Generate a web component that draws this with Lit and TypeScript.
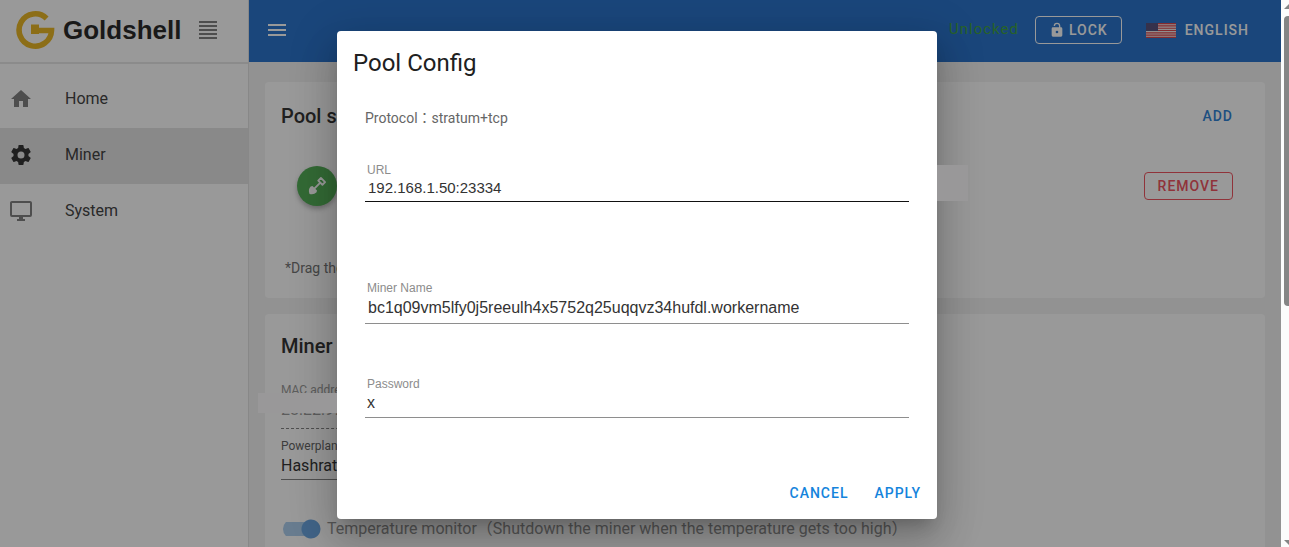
import { LitElement, html, css, svg } from "lit";
import { customElement, state } from "lit/decorators.js";

const icons = {
  home: svg`<path d="M10 20v-6h4v6h5v-8h3L12 3 2 12h3v8z"/>`,
  cog: svg`<path d="M12 15.5A3.5 3.5 0 0 1 8.5 12 3.5 3.5 0 0 1 12 8.5a3.5 3.5 0 0 1 3.5 3.5 3.5 3.5 0 0 1-3.5 3.5m7.43-2.53c.04-.32.07-.64.07-.97s-.03-.66-.07-1l2.11-1.63c.19-.15.24-.42.12-.64l-2-3.46c-.12-.22-.39-.31-.61-.22l-2.49 1c-.52-.39-1.06-.73-1.69-.98l-.37-2.65A.506.506 0 0 0 14 2h-4c-.25 0-.46.18-.5.42l-.37 2.65c-.63.25-1.17.59-1.69.98l-2.49-1c-.22-.09-.49 0-.61.22l-2 3.46c-.13.22-.07.49.12.64L4.57 11c-.04.34-.07.67-.07 1s.03.65.07.97l-2.11 1.66c-.19.15-.25.42-.12.64l2 3.46c.12.22.39.3.61.22l2.49-1.01c.52.4 1.06.74 1.69.99l.37 2.65c.04.24.25.42.5.42h4c.25 0 .46-.18.5-.42l.37-2.65c.63-.26 1.17-.59 1.69-.99l2.49 1.01c.22.08.49 0 .61-.22l2-3.46c.12-.22.07-.49-.12-.64z"/>`,
  monitor: svg`<path d="M21 16H3V4h18m0-2H3c-1.110 0-2 .89-2 2v12a2 2 0 0 0 2 2h7v2H8v2h8v-2h-2v-2h7a2 2 0 0 0 2-2V4c0-1.110-.9-2-2-2z"/>`,
  menu: svg`<path d="M3 6h18v2H3V6m0 5h18v2H3v-2m0 5h18v2H3z"/>`,
  justify: svg`<path d="M3 3h18v2H3V3m0 4h18v2H3V7m0 4h18v2H3v-2m0 4h18v2H3v-2m0 4h18v2H3z"/>`,
  lock: svg`<path fill-rule="evenodd" d="M18 8a2 2 0 0 1 2 2v10a2 2 0 0 1-2 2H6a2 2 0 0 1-2-2V10a2 2 0 0 1 2-2h9V6a3 3 0 0 0-6 0H7a5 5 0 0 1 10 0v2zM12 17a2 2 0 1 0 0-4 2 2 0 0 0 0 4z"/>`,
  shovel: svg`<path d="M3 21.500c-1.400-3.500-.8-6.800 1.400-9l2.200-.5 5.400 5.400-.5 2.200c-2.200 2.200-5 2.900-8.500 1.900z"/><path d="M8.500 15.500 16 8M13.500 5.500l5 5 3.200-3.200-5-5z" fill="none" stroke="currentColor" stroke-width="2.200" stroke-linejoin="round"/>`,
};

type IconName = keyof typeof icons;
const icon = (name: IconName, cls = "icon") =>
  html`<svg class=${cls} viewBox="0 0 24 24" aria-hidden="true">${icons[name]}</svg>`;

const shared = css`
  * { box-sizing: border-box; }
  .icon { width: 24px; height: 24px; fill: currentColor; flex: none; }
  button { font: 500 14px/16px Roboto, sans-serif; letter-spacing: 1px; background: none; border: 0; margin: 0; cursor: pointer; text-transform: uppercase; }
`;

@customElement("side-nav")
export class SideNav extends LitElement {
  static styles = [shared, css`
    :host { display: block; background: #fff; border-right: 1px solid #e0e0e0; }
    .brand { display: flex; align-items: center; height: 64px; padding: 0 16px 3px 15px; border-bottom: 2px solid #e6e6e6; }
    .logo { width: 40px; height: 40px; flex: none; }
    .name { font: bold 26px/32px "Liberation Sans", Arial, sans-serif; color: #141414; margin-left: 8px; }
    .brand button { padding: 0; margin-left: 15px; color: #606060; display: flex; }
    nav { padding-top: 8px; }
    a { display: flex; align-items: center; gap: 32px; height: 56px; padding: 0 9px 2px; color: #303030; font-size: 16px; line-height: 24px; text-decoration: none; }
    .icon { color: #757575; }
    .active { background: #e2e2e2; }
    .active .icon { color: #202020; }
  `];
  private items: { name: IconName; text: string }[] = [
    { name: "home", text: "Home" },
    { name: "cog", text: "Miner" },
    { name: "monitor", text: "System" },
  ];
  render() {
    return html`
      <div class="brand">
        <svg class="logo" viewBox="0 0 40 40" aria-hidden="true">
          <path d="M31.600 8.400A16.200 16.200 0 1 0 36.500 20.500H22" fill="none" stroke="#e8b010" stroke-width="5.600"/>
          <path d="M16 14.500h8v9.500h-8z" fill="#e8b010"/>
        </svg>
        <span class="name">Goldshell</span>
        <button aria-label="Collapse">${icon("justify")}</button>
      </div>
      <nav>
        ${this.items.map((i) => html`<a href="#" class=${i.text === "Miner" ? "active" : ""}>${icon(i.name)}<span>${i.text}</span></a>`)}
      </nav>`;
  }
}

@customElement("top-bar")
export class TopBar extends LitElement {
  static styles = [shared, css`
    :host { display: flex; align-items: center; height: 62px; padding: 0 32px 2px 16px; background: #1567c8; color: #fff; }
    button { display: flex; align-items: center; color: #fff; }
    .menu { padding: 0; }
    .state { margin-left: auto; color: #2f9a2f; font-size: 15px; line-height: 20px; letter-spacing: 1px; padding-bottom: 2px; }
    .lock { height: 28px; margin-left: 16px; padding: 0 13px; gap: 4px; border: 1px solid #fff; border-radius: 4px; }
    .lock .icon { width: 16px; height: 16px; }
    .lang { margin-left: 24px; padding: 0; gap: 9px; }
    .flag { width: 30px; height: 15px; }
  `];
  render() {
    return html`
      <button class="menu" aria-label="Menu">${icon("menu")}</button>
      <span class="state">Unlocked</span>
      <button class="lock">${icon("lock")}Lock</button>
      <button class="lang">
        <svg class="flag" viewBox="0 0 30 15" aria-hidden="true">
          <path fill="#f0eaea" d="M0 0h30v15H0z"/>
          <path stroke="#d8343c" stroke-width="1.150" d="M0 .6h30M0 2.900h30M0 5.200h30M0 7.500h30M0 9.800h30M0 12.100h30M0 14.400h30"/>
          <path fill="#47406f" d="M0 0h12v8H0z"/>
        </svg>English
      </button>`;
  }
}

@customElement("miner-page")
export class MinerPage extends LitElement {
  static styles = [shared, css`
    :host { display: flex; flex-direction: column; gap: 16px; padding: 20px 16px 0; background: #f3f3f3; }
    section { background: #fff; padding: 16px; border-radius: 4px; color: #202020; }
    h2 { font-size: 20px; line-height: 32px; font-weight: 500; margin: 0; }
    .head { display: flex; justify-content: space-between; align-items: center; padding: 2px 16px 0 0; }
    .add { color: #1976d2; padding: 8px 0; }
    .pool { display: flex; justify-content: space-between; align-items: center; padding: 34px 16px 0; }
    .badge { display: flex; align-items: center; justify-content: center; width: 40px; height: 40px; border-radius: 50%; background: #43a847; color: #fff; box-shadow: 0 3px 5px rgba(0, 0, 0, .3); }
    .badge .icon { width: 20px; height: 20px; }
    .remove { height: 28px; padding: 0 13px; border: 1px solid #ee4450; border-radius: 4px; color: #ee4450; }
    .hint { margin: 0; padding: 52px 4px 4px; font-size: 14px; line-height: 20px; color: #666; }
    .field { display: flex; flex-direction: column; width: 50%; }
    label { font-size: 12px; line-height: 16px; color: #555; }
    input[type="text"], select { appearance: none; border: 0; border-bottom: 1px solid #777; border-radius: 0; background: none; padding: 0; margin: 0; height: 26px; font: 16px/24px Roboto, sans-serif; color: #202020; }
    .mac { padding-top: 20px; }
    .mac label { color: #909090; }
    .mac input[type="text"] { height: 31px; padding-bottom: 8px; color: #909090; border-bottom-style: dashed; }
    .power { padding-top: 9px; }
    .power select { padding-bottom: 2px; }
    .monitor { display: flex; align-items: center; gap: 6px; padding: 37px 0 0 2px; }
    .switch { appearance: none; width: 38px; height: 20px; margin: 0; border-radius: 10px; opacity: .7; background: radial-gradient(circle at 28px 10px, #1976d2 9px, transparent 10px), linear-gradient(#80b4e6, #80b4e6) 0 3px / 32px 14px no-repeat; }
    .monitor label { font-size: 16px; line-height: 24px; color: #888; font-family: Roboto, "Noto Sans CJK TC", sans-serif; }
  `];
  render() {
    return html`
      <section>
        <div class="head"><h2>Pool settings</h2><button class="add">Add</button></div>
        <div class="pool"><span class="badge">${icon("shovel")}</span><button class="remove">Remove</button></div>
        <p class="hint">*Drag the pools to change their order</p>
      </section>
      <section>
        <h2>Miner settings</h2>
        <div class="field mac"><label for="mac">MAC address</label><input id="mac" type="text" readonly value="28:E2:97:1A"></div>
        <div class="field power"><label for="plan">Powerplan</label><select id="plan"><option>Hashrate mode</option></select></div>
        <div class="monitor">
          <input class="switch" id="temp" type="checkbox" checked>
          <label for="temp">Temperature monitor（Shutdown the miner when the temperature gets too high）</label>
        </div>
      </section>`;
  }
}

@customElement("pool-dialog")
export class PoolDialog extends LitElement {
  static styles = [shared, css`
    :host { position: absolute; inset: 0; display: flex; align-items: center; justify-content: center; padding: 3px 7px 0 0; background: rgba(33, 33, 33, .46); }
    .dialog { position: relative; width: 600px; max-width: 90%; background: #fff; border-radius: 4px; box-shadow: 0 11px 15px -7px rgba(0, 0, 0, .2), 0 24px 38px 3px rgba(0, 0, 0, .14), 0 9px 46px 8px rgba(0, 0, 0, .12); }
    .mask { position: absolute; background: #999899; }
    .mask.left { right: 100%; top: 362px; width: 79px; height: 20px; }
    .mask.right { left: 100%; top: 134px; width: 31px; height: 36px; }
    h1 { margin: 0; padding: 16px 16px 0; font-size: 24px; line-height: 32px; font-weight: 400; color: #202020; }
    form { padding: 0 28px; }
    .protocol { margin: 0; padding-top: 29px; font-size: 14px; line-height: 20px; color: #666; font-family: Roboto, "Noto Sans CJK TC", sans-serif; }
    .field { display: flex; flex-direction: column; font-family: "Liberation Sans", Arial, sans-serif; }
    label { font-size: 12px; line-height: 16px; color: #8c8c8c; padding-left: 2px; }
    input { border: 0; border-bottom: 1px solid #8e8e8e; outline: 0; padding: 0 3px; font: 16px/20px "Liberation Sans", Arial, sans-serif; color: #333; background: none; width: 100%; }
    .url { padding-top: 34px; }
    .url input { font-size: 15px; height: 24px; padding-bottom: 4px; border-color: #111; }
    .name { padding-top: 78px; }
    .name input { height: 28px; padding-bottom: 4px; }
    .pass { padding-top: 52px; }
    .pass input { height: 26px; padding: 0 2px 3px; }
    .actions { display: flex; justify-content: flex-end; gap: 10px; padding: 57px 8px 8px; }
    .actions button { padding: 10px 8px; color: #1584dc; }
  `];
  render() {
    return html`
      <div class="dialog" role="dialog" aria-labelledby="title">
        <span class="mask left"></span><span class="mask right"></span>
        <h1 id="title">Pool Config</h1>
        <form>
          <p class="protocol" lang="zh-Hant">Protocol：stratum+tcp</p>
          <div class="field url"><label for="url">URL</label><input id="url" value="192.168.1.50:23334"></div>
          <div class="field name"><label for="name">Miner Name</label><input id="name" spellcheck="false" value="bc1q09vm5lfy0j5reeulh4x5752q25uqqvz34hufdl.workername"></div>
          <div class="field pass"><label for="pass">Password</label><input id="pass" value="x"></div>
        </form>
        <div class="actions">
          <button @click=${() => this.dispatchEvent(new Event("close"))}>Cancel</button>
          <button @click=${() => this.dispatchEvent(new Event("close"))}>Apply</button>
        </div>
      </div>`;
  }
}

@customElement("app-root")
export class AppRoot extends LitElement {
  static styles = [shared, css`
    :host { display: grid; grid-template-columns: minmax(0, 1fr) 8px; height: 100vh; overflow: hidden; font-family: Roboto, "Noto Sans CJK SC", sans-serif; }
    .app { position: relative; display: grid; grid-template-columns: 249px minmax(0, 1fr); min-height: 0; overflow: hidden; }
    .main { display: grid; grid-template-rows: auto 1fr; min-width: 0; }
    .scroll { display: flex; flex-direction: column; background: #fcfcfc; overflow: hidden; padding-left: 3px; }
    .arrow { width: 8px; height: 16px; fill: #858585; flex: none; }
    .thumb { height: 53%; width: 9px; border-radius: 4px; background: #858585; }
    .scroll .arrow:last-child { margin-top: auto; }
  `];
  @state() private open = true;
  render() {
    return html`
      <div class="app">
        <side-nav></side-nav>
        <div class="main"><top-bar></top-bar><miner-page></miner-page></div>
        ${this.open ? html`<pool-dialog @close=${() => (this.open = false)}></pool-dialog>` : ""}
      </div>
      <div class="scroll" aria-hidden="true">
        <svg class="arrow" viewBox="0 0 8 16"><path d="M0 9l5-5 5 5z"/></svg>
        <div class="thumb"></div>
        <svg class="arrow" viewBox="0 0 8 16"><path d="M0 9l5 5 5-5z"/></svg>
      </div>`;
  }
}
